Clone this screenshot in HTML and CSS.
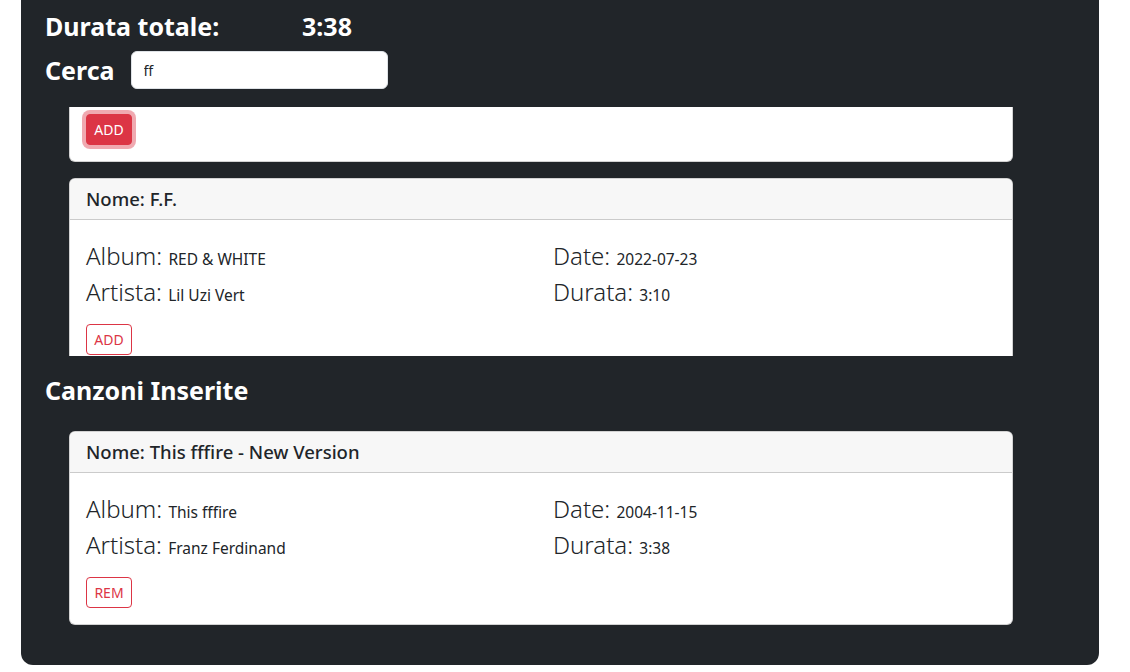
FILE: index.html
```html
<!DOCTYPE html>
<html lang="it">
<head>
<meta charset="utf-8">
<title>Playlist</title>
<link rel="stylesheet" href="styles.css">
</head>
<body>
<div class="page">
  <div class="panel">
    <div class="total">
      <h2 class="total-label">Durata totale:</h2>
      <h2 class="total-value">3:38</h2>
    </div>
    <div class="search">
      <label class="search-label" for="q">Cerca</label>
      <input id="q" class="search-input" type="text" value="ff">
    </div>
    <div class="results">
      <div class="results-inner">
        <div class="card">
          <div class="card-header">Nome: ffff</div>
          <div class="card-body">
            <div class="row">
              <div class="col">
                <p class="lead">Album: <span class="val">ffff</span><br>Artista: <span class="val">Unknown</span></p>
              </div>
              <div class="col">
                <p class="lead">Date: <span class="val">2020-01-01</span><br>Durata: <span class="val">2:45</span></p>
              </div>
            </div>
            <button class="btn btn-filled">ADD</button>
          </div>
        </div>
        <div class="card">
          <div class="card-header">Nome: F.F.</div>
          <div class="card-body">
            <div class="row">
              <div class="col">
                <p class="lead">Album: <span class="val">RED &amp; WHITE</span><br>Artista: <span class="val">Lil Uzi Vert</span></p>
              </div>
              <div class="col">
                <p class="lead">Date: <span class="val">2022-07-23</span><br>Durata: <span class="val">3:10</span></p>
              </div>
            </div>
            <button class="btn">ADD</button>
          </div>
        </div>
      </div>
    </div>
    <h2 class="section-title">Canzoni Inserite</h2>
    <div class="list">
      <div class="card">
        <div class="card-header">Nome: This fffire - New Version</div>
        <div class="card-body">
          <div class="row">
            <div class="col">
              <p class="lead">Album: <span class="val">This fffire</span><br>Artista: <span class="val">Franz Ferdinand</span></p>
            </div>
            <div class="col">
              <p class="lead">Date: <span class="val">2004-11-15</span><br>Durata: <span class="val">3:38</span></p>
            </div>
          </div>
          <button class="btn">REM</button>
        </div>
      </div>
    </div>
  </div>
</div>
</body>
</html>
```

FILE: styles.css
```css
* { box-sizing: border-box; }
html, body { margin: 0; padding: 0; background: #fff; }
body {
  font-family: "Noto Sans", "Open Sans", sans-serif;
  color: #212529;
  height: 672px;
  overflow: hidden;
}
.page { padding: 0 31px 0 21px; }
.panel {
  background: #212529;
  width: 1078px;
  border-radius: 0 0 12px 12px;
  padding: 10px 24px 24px 24px;
}
.total { display: flex; align-items: baseline; }
h2 { margin: 0; color: #fff; font-weight: 700; font-size: 25px; line-height: 32px; }
.total-label { width: 257px; }
.search { display: flex; align-items: center; gap: 16px; margin-top: 9px; }
.search-label { color: #fff; font-weight: 700; font-size: 25px; line-height: 32px; }
.search-input {
  width: 257px; height: 38px;
  border: 1px solid #dee2e6; border-radius: 6px;
  padding: 6px 12px; font-family: inherit; font-size: 14px; color: #212529;
  background: #fff;
}
.results {
  margin: 18px 0 0 24px;
  width: 944px;
  height: 249px;
  overflow: hidden;
}
.results-inner { margin-top: -139px; }
.card {
  background: #fff;
  border: 1px solid rgba(0,0,0,.175);
  border-radius: 6px;
  margin-bottom: 16px;
}
.card-header {
  background: #f7f7f7;
  border-bottom: 1px solid rgba(0,0,0,.175);
  border-radius: 5px 5px 0 0;
  padding: 8px 16px;
  font-size: 18.5px; font-weight: 500; line-height: 24px;
}
.card-body { padding: 18px 16px 16px; }
.row { display: flex; gap: 24px; }
.col { flex: 1 1 0; }
.lead { margin: 0 0 14px; font-size: 24px; font-weight: 300; line-height: 36px; }
.val { font-size: 15.5px; font-weight: 400; line-height: 1; }
.btn {
  display: inline-block;
  font-family: inherit; font-size: 14px; line-height: 21px;
  padding: 4px 0; border: 1px solid #dc3545; border-radius: 4px;
  background: #fff; color: #dc3545; width: 46px; text-align: center;
}
.btn-filled {
  background: #dc3545; color: #fff;
  box-shadow: 0 0 0 4px rgba(225,83,97,.5);
}
.section-title { margin: 18px 0 0; }
.list { margin: 25px 0 0 24px; width: 944px; }
```
